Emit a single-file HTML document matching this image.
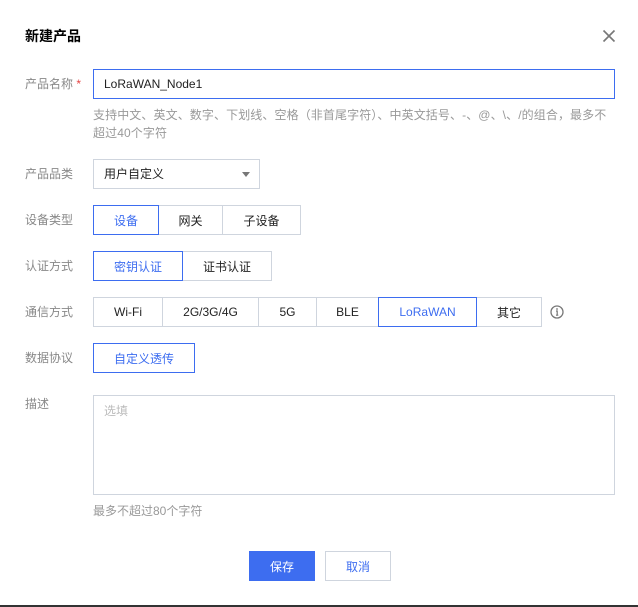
<!DOCTYPE html>
<html><head><meta charset="utf-8"><style>
*{margin:0;padding:0;box-sizing:border-box}
body{width:638px;height:607px;background:#fff;position:relative;overflow:hidden;font-family:"Liberation Sans","Noto Sans CJK SC",sans-serif;font-size:12px;color:#000}
.a{position:absolute}
.lbl{position:absolute;left:25px;color:#888;font-size:12px;line-height:16px}
.b{position:absolute;border:1px solid #cfd5de;background:#fff;display:flex;align-items:center;justify-content:center;color:#222;font-size:12px}
.sel{border-color:#3d6df0;color:#3d6df0;z-index:2}
.hint{position:absolute;left:93px;color:#999;font-size:12px;line-height:18px}
</style></head><body>
<div class="a" style="left:25px;top:26px;font-size:14px;font-weight:bold;color:#000">新建产品</div>
<svg class="a" style="left:602px;top:29px" width="14" height="14" viewBox="0 0 14 14"><path d="M1.5 1.5L12.5 12.5M12.5 1.5L1.5 12.5" stroke="#777" stroke-width="1.6"/></svg>

<div class="lbl" style="top:76px">产品名称 <span style="color:#e54545">*</span></div>
<div class="a" style="left:93px;top:69px;width:522px;height:30px;border:1px solid #3d6df0;padding-left:10px;line-height:28px;font-size:12px;color:#222">LoRaWAN_Node1</div>
<div class="hint" style="top:106px;width:514px;letter-spacing:0.1px">支持中文、英文、数字、下划线、空格（非首尾字符）、中英文括号、-、@、\、/的组合，最多不超过40个字符</div>

<div class="lbl" style="top:166px">产品品类</div>
<div class="a" style="left:93px;top:159px;width:167px;height:30px;border:1px solid #cfd5de;padding-left:10px;line-height:28px;color:#222">用户自定义</div>
<div class="a" style="left:242px;top:172px;width:0;height:0;border-left:4px solid transparent;border-right:4px solid transparent;border-top:5px solid #777"></div>

<div class="lbl" style="top:212px">设备类型</div>
<div class="b sel" style="left:93px;top:205px;width:66px;height:30px">设备</div>
<div class="b" style="left:158px;top:205px;width:65px;height:30px">网关</div>
<div class="b" style="left:222px;top:205px;width:79px;height:30px">子设备</div>

<div class="lbl" style="top:258px">认证方式</div>
<div class="b sel" style="left:93px;top:251px;width:90px;height:30px">密钥认证</div>
<div class="b" style="left:182px;top:251px;width:90px;height:30px">证书认证</div>

<div class="lbl" style="top:304px">通信方式</div>
<div class="b" style="left:93px;top:297px;width:70px;height:30px">Wi-Fi</div>
<div class="b" style="left:162px;top:297px;width:97px;height:30px">2G/3G/4G</div>
<div class="b" style="left:258px;top:297px;width:59px;height:30px">5G</div>
<div class="b" style="left:316px;top:297px;width:63px;height:30px">BLE</div>
<div class="b sel" style="left:378px;top:297px;width:99px;height:30px">LoRaWAN</div>
<div class="b" style="left:476px;top:297px;width:66px;height:30px">其它</div>
<svg class="a" style="left:550px;top:305px" width="14" height="14" viewBox="0 0 14 14"><circle cx="7" cy="7" r="6" fill="none" stroke="#777" stroke-width="1.3"/><circle cx="7" cy="4" r="0.9" fill="#777"/><path d="M6 6H7.2V10M6 10.2H8.3" stroke="#777" stroke-width="1.2" fill="none"/></svg>

<div class="lbl" style="top:350px">数据协议</div>
<div class="b sel" style="left:93px;top:343px;width:102px;height:30px">自定义透传</div>

<div class="lbl" style="top:396px">描述</div>
<div class="a" style="left:93px;top:395px;width:522px;height:100px;border:1px solid #cfd5de;padding:6px 10px;color:#bbb;font-size:12px">选填</div>
<div class="hint" style="top:502px">最多不超过80个字符</div>

<div class="a" style="left:249px;top:551px;width:66px;height:30px;background:#3d6df0;color:#fff;display:flex;align-items:center;justify-content:center;font-size:12px">保存</div>
<div class="b" style="left:325px;top:551px;width:66px;height:30px;color:#3d6df0">取消</div>

<div class="a" style="left:0;top:605px;width:638px;height:2px;background:#333"></div>
</body></html>
